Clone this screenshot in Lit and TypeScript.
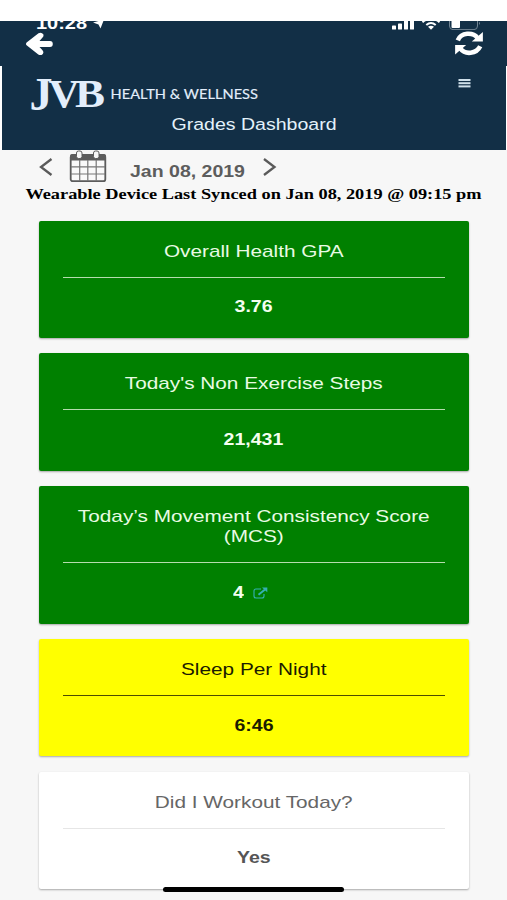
import { LitElement, html, css, nothing } from "lit";
import { customElement, property } from "lit/decorators.js";

@customElement("grade-card")
class GradeCard extends LitElement {
  @property({ attribute: false }) lines: string[] = [];
  @property() value = "";
  @property({ reflect: true }) tone = "good";
  @property({ type: Boolean }) link = false;

  static styles = css`
    :host {
      display: block;
      box-sizing: border-box;
      padding: 21px 24.5px 0;
      height: 117.4px;
      flex: none;
      border-radius: 2px;
      text-align: center;
      color: #e9fbe4;
      background: #008000;
      box-shadow: 0 1px 2px rgba(0, 0, 0, 0.32);
    }
    :host([tall]) { height: 138.2px; }
    :host([tone="warn"]) { background: #ff0; color: #1b1b00; }
    :host([tone="plain"]) { background: #fff; color: #666; }
    .title { font-size: 17px; line-height: 20.5px; }
    .line { display: block; transform: scaleX(1.222); white-space: nowrap; }
    .rule { height: 1px; margin-top: 14.5px; background: #b5dcae; }
    :host([tone="warn"]) .rule { background: #4c4c00; }
    :host([tone="plain"]) .rule { background: #e6e6e6; }
    .value {
      display: flex;
      justify-content: center;
      align-items: center;
      margin-top: 19.6px;
      font-size: 16px;
      line-height: 20px;
      font-weight: bold;
      color: #f4fff0;
    }
    :host([tone="warn"]) .value { color: #1b1b00; }
    :host([tone="plain"]) .value { color: #555; }
    .num { display: block; transform: scaleX(1.22); }
    svg { display: block; margin: 0 5px 0 10px; }
  `;

  render() {
    return html`
      <div class="title">${this.lines.map((l) => html`<span class="line">${l}</span>`)}</div>
      <div class="rule"></div>
      <div class="value">
        <span class="num">${this.value}</span>
        ${this.link
          ? html`<svg width="15" height="12" viewBox="0 0 15 12" fill="none" stroke="#35b0b4" stroke-width="1.1">
              <path d="M8 2H3Q1 2 1 4V9Q1 11 3 11H9Q11 11 11 9V7" />
              <path d="M5.5 7.8L12 2.4" stroke-width="1.9" />
              <path d="M9 .5H14.300V5.300Z" fill="#35b0b4" stroke="none" />
            </svg>`
          : nothing}
      </div>
    `;
  }
}

const CARDS = [
  { lines: ["Overall Health GPA"], value: "3.76", tone: "good" },
  { lines: ["Today's Non Exercise Steps"], value: "21,431", tone: "good" },
  { lines: ["Today’s Movement Consistency Score", "(MCS)"], value: "4", tone: "good", link: true },
  { lines: ["Sleep Per Night"], value: "6:46", tone: "warn" },
  { lines: ["Did I Workout Today?"], value: "Yes", tone: "plain" },
];

@customElement("app-root")
class AppRoot extends LitElement {
  static styles = css`
    :host {
      display: flex;
      flex-direction: column;
      position: relative;
      box-sizing: border-box;
      width: 507px;
      height: 900px;
      padding-top: 20.5px;
      overflow: hidden;
      background: #fff;
      font-family: "Liberation Sans", Arial, sans-serif;
    }
    svg { display: block; flex: none; }
    .top {
      height: 45.5px;
      flex: none;
      background: #122f46;
      overflow: hidden;
    }
    .status {
      display: flex;
      justify-content: space-between;
      height: 9.5px;
      padding: 0 24px 0 36px;
      overflow: hidden;
    }
    .nav {
      display: flex;
      justify-content: space-between;
      padding: 1px 23px 0 26px;
    }
    .header {
      height: 84.3px;
      flex: none;
      margin: 0 1px 0 2px;
      background: #122f46;
      color: #e4f2fb;
    }
    .brand {
      display: flex;
      justify-content: space-between;
      padding: 9px 35px 0 26px;
      height: 39px;
    }
    .logo { overflow: visible; }
    .menu { margin-top: 3px; }
    .page {
      font-size: 16.3px;
      line-height: 20px;
      text-align: center;
      transform: scaleX(1.2);
    }
    .body {
      flex: 1;
      background: #f7f7f7;
      display: flex;
      flex-direction: column;
      min-height: 0;
    }
    .date {
      display: flex;
      height: 34px;
      padding-left: 39px;
      color: #5d5d5d;
    }
    .chev { margin-top: 8px; }
    .cal { margin-left: 15px; }
    .day {
      font-size: 16.2px;
      line-height: 20px;
      font-weight: bold;
      width: 115px;
      margin: 11px 0 0 23px;
      white-space: nowrap;
      transform: scaleX(1.205);
      transform-origin: left;
    }
    .next { margin-left: 17px; }
    .sync {
      font-family: "Liberation Serif", "Times New Roman", serif;
      font-weight: bold;
      font-size: 15.2px;
      line-height: 20px;
      height: 20px;
      color: #000;
      text-align: center;
      white-space: nowrap;
      transform: scaleX(1.206);
    }
    .cards {
      display: flex;
      flex-direction: column;
      gap: 15.1px;
      padding: 16.5px 38px 0 38.5px;
    }
    .home {
      position: absolute;
      left: 163px;
      top: 887px;
      width: 181px;
      height: 5px;
      border-radius: 3px;
      background: #000;
    }
  `;

  private chevron(d: string) {
    return html`<svg width="15" height="18" viewBox="0 0 15 18" fill="none" stroke="#5a5a5a" stroke-width="2.300"><path d=${d} /></svg>`;
  }

  render() {
    return html`
      <div class="top">
        <div class="status">
          <svg width="72" height="10" viewBox="0 0 72 10" fill="#fff">
            <text x="0" y="8" font-size="17" font-weight="bold" textLength="51" lengthAdjust="spacingAndGlyphs">10:28</text>
            <path d="M57 1.500L68 -1.500L64.500 7.500L62.500 3.500Z" />
          </svg>
          <svg width="92" height="10" viewBox="0 0 92 10" fill="#fff">
            <rect x="1" y="4.6" width="4" height="4" rx=".7" />
            <rect x="7" y="2.6" width="4" height="6" rx=".7" />
            <rect x="13" y="-2" width="4" height="10.6" rx=".7" />
            <rect x="19" y="-4" width="4" height="12.6" rx=".7" />
            <g fill="none" stroke="#fff" stroke-width="2">
              <path d="M31.500 1.200Q40 -6 48.500 1.200" />
              <path d="M35.300 4Q40 0 44.700 4" />
            </g>
            <path d="M37 5.700Q40 4 43 5.700L40 8.800Z" />
            <path d="M58.500 -4V5Q58.500 8.600 62 8.600H83Q86.500 8.600 86.500 5V-4" fill="none" stroke="#718493" stroke-width="1" />
            <rect x="60.500" y="-4" width="8.500" height="11" rx="1" />
            <path d="M88 1Q90 2 88 4Z" fill="#718493" />
          </svg>
        </div>
        <div class="nav">
          <svg width="28" height="25" viewBox="0 0 28 25" fill="#fff">
            <path d="M.600 11.500L12.500 2.200Q15.500 .800 17.300 3.300Q18 5.200 16.300 6.800L13.500 10H24Q26.800 10.200 26.800 13Q26.800 15.800 24 16H13.500L16.300 19Q18.200 21 16.800 22.900Q14.800 24.900 12.300 23.500L.600 14.300Q-.600 12.900 .600 11.500Z" />
          </svg>
          <svg width="30" height="25" viewBox="0 0 30 25" fill="none" stroke="#fff" stroke-width="4.600">
            <path d="M3.800 9.300C7 1.200 19 .8 23.500 6.800" />
            <path d="M26.200 15.300C22.500 23.100 11 23.900 6.500 17.700" />
            <path d="M28.900 1V10.600H17.800Z" fill="#fff" stroke="none" />
            <path d="M1.100 23.600V14H12.200Z" fill="#fff" stroke="none" />
          </svg>
        </div>
      </div>
      <div class="header">
        <div class="brand">
          <svg class="logo" width="232" height="40" viewBox="28 75 232 40" fill="#e3eefb">
            <g font-family="Liberation Serif, serif" font-weight="bold">
              <text x="29.500" y="110.300" font-size="46" textLength="23" lengthAdjust="spacingAndGlyphs">J</text>
              <text x="48.500" y="106.500" font-size="40" textLength="31" lengthAdjust="spacingAndGlyphs">V</text>
              <text x="75" y="106.500" font-size="40" textLength="30" lengthAdjust="spacingAndGlyphs">B</text>
            </g>
            <text x="110.500" y="99.300" font-family="Lato, sans-serif" font-size="13.300" stroke="#e3eefb" stroke-width=".15" textLength="147.500" lengthAdjust="spacingAndGlyphs">HEALTH &amp; WELLNESS</text>
          </svg>
          <svg class="menu" width="13" height="11" viewBox="0 0 13 11" fill="#cfe0ea">
            <rect x=".5" y="1" width="12" height="2" />
            <rect x=".5" y="4.200" width="12" height="2" />
            <rect x=".5" y="7.400" width="12" height="2" />
          </svg>
        </div>
        <div class="page">Grades Dashboard</div>
      </div>
      <div class="body">
        <div class="date">
          <div class="chev">${this.chevron("M12.500 1L2 9L12.500 17")}</div>
          <svg class="cal" width="38" height="33" viewBox="0 0 38 33">
            <rect x="1.700" y="5.200" width="34.600" height="26" rx="2" fill="#fafafa" stroke="#5c5c5c" stroke-width="1.800" />
            <path d="M1 10V6Q1 4 3 4H35Q37 4 37 6V10.500H1Z" fill="#5c5c5c" />
            <path d="M10.700 10V31M18.800 10V31M27.200 10V31M2 16.800H36M2 24H36" stroke="#777" stroke-width="1.200" />
            <rect x="7.500" y="1" width="5.500" height="7.500" rx="2" fill="#f7f7f7" stroke="#5c5c5c" />
            <rect x="24.500" y="1" width="5.500" height="7.500" rx="2" fill="#f7f7f7" stroke="#5c5c5c" />
          </svg>
          <div class="day">Jan 08, 2019</div>
          <div class="chev next">${this.chevron("M2 1L12.500 9L2 17")}</div>
        </div>
        <div class="sync">Wearable Device Last Synced on Jan 08, 2019 @ 09:15 pm</div>
        <div class="cards">
          ${CARDS.map(
            (c) => html`<grade-card
              .lines=${c.lines}
              value=${c.value}
              tone=${c.tone}
              ?link=${c.link}
              ?tall=${c.lines.length > 1}
            ></grade-card>`
          )}
        </div>
      </div>
      <div class="home"></div>
    `;
  }
}
